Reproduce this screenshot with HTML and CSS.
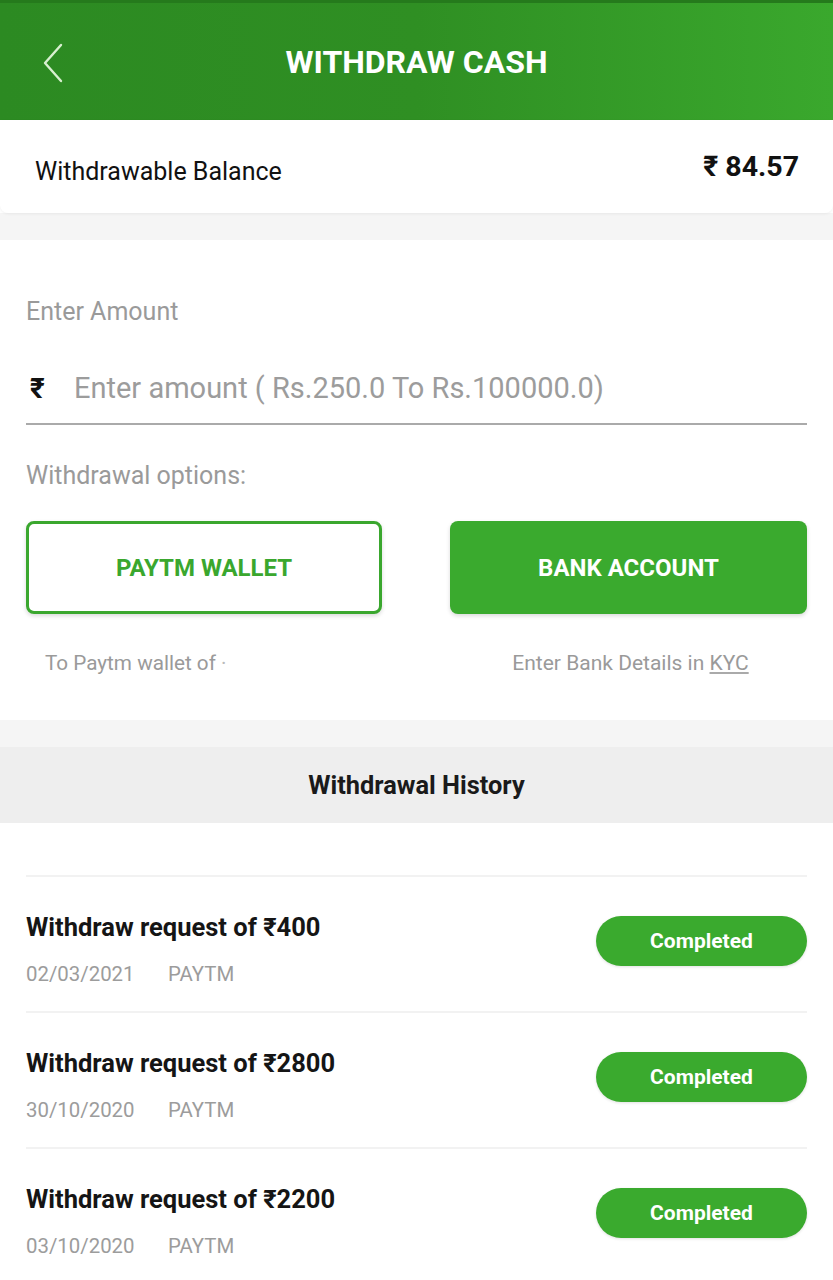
FILE: index.html
```html
<!DOCTYPE html>
<html>
<head>
<meta charset="utf-8">
<link rel="stylesheet" href="styles.css">
</head>
<body>
<header class="topbar">
  <svg class="back" width="24" height="40" viewBox="0 0 24 40"><path d="M20 2 L4 20 L20 38" fill="none" stroke="#d8f0d0" stroke-width="2.4" stroke-linecap="round" stroke-linejoin="round"/></svg>
  <h1 class="title">WITHDRAW CASH</h1>
</header>
<section class="balance">
  <span class="balance-label">Withdrawable Balance</span>
  <span class="balance-value">₹ 84.57</span>
</section>
<div class="gap"></div>
<section class="form">
  <div class="label">Enter Amount</div>
  <div class="amount-row">
    <span class="rupee">₹</span>
    <span class="placeholder">Enter amount ( Rs.250.0 To Rs.100000.0)</span>
  </div>
  <div class="label options-label">Withdrawal options:</div>
  <div class="options">
    <div class="opt">
      <div class="btn btn-outline">PAYTM WALLET</div>
      <div class="opt-note note-left">To Paytm wallet of <span class="dot">·</span></div>
    </div>
    <div class="opt">
      <div class="btn btn-fill">BANK ACCOUNT</div>
      <div class="opt-note note-right">Enter Bank Details in <u>KYC</u></div>
    </div>
  </div>
</section>
<div class="gap"></div>
<div class="history-head">Withdrawal History</div>
<section class="history">
  <div class="item">
    <div class="item-info">
      <div class="item-title">Withdraw request of ₹400</div>
      <div class="item-meta"><span class="date">02/03/2021</span><span>PAYTM</span></div>
    </div>
    <div class="pill">Completed</div>
  </div>
  <div class="item">
    <div class="item-info">
      <div class="item-title">Withdraw request of ₹2800</div>
      <div class="item-meta"><span class="date">30/10/2020</span><span>PAYTM</span></div>
    </div>
    <div class="pill">Completed</div>
  </div>
  <div class="item">
    <div class="item-info">
      <div class="item-title">Withdraw request of ₹2200</div>
      <div class="item-meta"><span class="date">03/10/2020</span><span>PAYTM</span></div>
    </div>
    <div class="pill">Completed</div>
  </div>
</section>
</body>
</html>
```
FILE: styles.css
```css
* { box-sizing: border-box; }
html, body { margin: 0; padding: 0; }
body {
  width: 833px;
  height: 1280px;
  overflow: hidden;
  background: #ffffff;
  font-family: Roboto, "Liberation Sans", sans-serif;
  color: #111;
}
.topbar {
  height: 120px;
  background: linear-gradient(90deg, #2c8a22 0%, #2f8f23 50%, #3aa82d 100%);
  border-top: 3px solid #257a1c;
  display: flex;
  align-items: center;
  justify-content: center;
  position: relative;
}
.back { position: absolute; left: 41px; top: 40px; }
.title {
  margin: 0;
  color: #fff;
  font-size: 32px;
  font-weight: 700;
  letter-spacing: 0;
}
.balance {
  height: 93px;
  display: flex;
  align-items: center;
  justify-content: space-between;
  padding: 9px 34px 0 35px;
  background: #fff;
  border-radius: 0 0 8px 8px;
  box-shadow: 0 1px 3px rgba(0,0,0,0.06);
  position: relative;
}
.balance-label { font-size: 25px; color: #111; }
.balance-value { font-size: 28.5px; font-weight: 700; margin-top: -10px; }
.gap { height: 27px; background: #f5f5f5; }
.form { padding: 57px 26px 44px 26px; }
.label { font-size: 25px; line-height: 30px; color: #9a9a9a; }
.amount-row {
  margin-top: 34px;
  height: 64px;
  display: flex;
  align-items: center;
  gap: 26px;
  border-bottom: 2px solid #aaaaaa;
  padding: 0 0 8px 4px;
}
.rupee { font-size: 28px; font-weight: 700; color: #111; width: 18px; }
.placeholder { font-size: 29px; color: #9c9c9c; }
.options-label { margin-top: 36px; }
.options {
  margin-top: 30px;
  display: flex;
  justify-content: space-between;
}
.opt { width: 357px; }
.btn {
  height: 93px;
  border-radius: 8px;
  display: flex;
  align-items: center;
  justify-content: center;
  font-size: 24px;
  font-weight: 700;
  box-shadow: 0 2px 4px rgba(0,0,0,0.15);
}
.btn-outline { border: 3px solid #3aa72e; color: #3aa72e; background: #fff; width: 356px; }
.btn-fill { background: #3aaa2e; color: #fff; }
.opt-note { font-size: 21px; line-height: 26px; color: #9a9a9a; margin-top: 36px; }
.note-left { padding-left: 19px; font-size: 20.7px; }
.note-right { text-align: center; padding-left: 4px; padding-right: 0; }
.note-right u { text-decoration-color: #aaa; }
.dot { color: #bbb; }
.history-head {
  height: 76px;
  background: #eeeeee;
  display: flex;
  align-items: center;
  justify-content: center;
  font-size: 25.4px;
  font-weight: 700;
  color: #1a1a1a;
}
.history { padding: 52px 26px 0 26px; }
.item {
  height: 136px;
  border-top: 2px solid #f2f2f2;
  display: flex;
  align-items: flex-start;
  justify-content: space-between;
  padding-top: 35px;
}
.item-title { font-size: 25.5px; line-height: 30px; font-weight: 700; color: #151515; }
.item-meta { margin-top: 20px; font-size: 20.4px; line-height: 24px; color: #9c9c9c; }
.date { display: inline-block; width: 142px; }
.pill {
  width: 211px;
  height: 50px;
  border-radius: 25px;
  background: #3aaa2e;
  color: #fff;
  font-size: 21px;
  font-weight: 700;
  display: flex;
  align-items: center;
  justify-content: center;
  margin-top: 4px;
  box-shadow: 0 1px 3px rgba(0,0,0,0.12);
}
```
